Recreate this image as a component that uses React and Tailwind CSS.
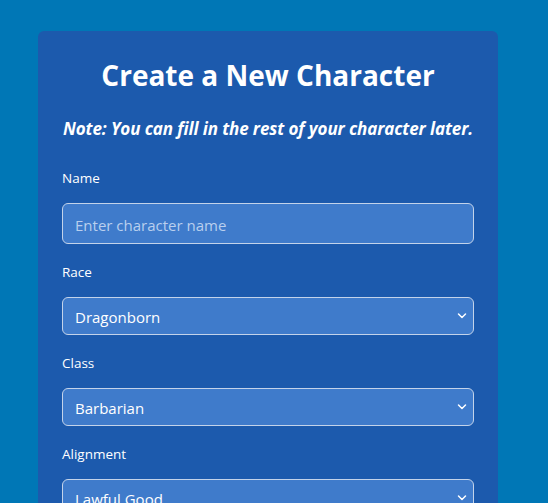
import React from "react";

function Chevron() {
  return (
    <svg className="pointer-events-none absolute right-[6px] top-1/2 -translate-y-1/2" width="10" height="7" viewBox="0 0 10 7" fill="none">
      <path d="M1.5 1.5 L5 5 L8.5 1.5" stroke="white" strokeWidth="1.5" strokeLinecap="round" strokeLinejoin="round" />
    </svg>
  );
}

function SelectField({ label, value }) {
  return (
    <div className="mb-[18px]">
      <div className="mb-[15px] text-[13.5px] leading-[20px] text-white">{label}</div>
      <div className="relative flex h-[38px] items-center rounded-[6px] border border-[#c3d3ea] bg-[#3f7bcb] px-[12px] pt-[3px] text-[15px] text-white">
        {value}
        <Chevron />
      </div>
    </div>
  );
}

export default function App() {
  return (
    <div className="h-[503px] overflow-hidden bg-[#0077b6] pl-[38px] pt-[31px]" style={{ fontFamily: '"Open Sans", "Noto Sans", sans-serif' }}>
      <div className="w-[460px] rounded-t-[6px] bg-[#1c5aad] px-[24px] pt-[26px] pb-[20px]">
        <h1 className="text-center text-[28px] font-bold leading-[36px] text-white">Create a New Character</h1>
        <p className="mt-[24px] whitespace-nowrap text-center text-[17px] font-bold italic leading-[24px] tracking-[-0.1px] text-white">
          Note: You can fill in the rest of your character later.
        </p>
        <div className="mt-[27px]">
          <div className="mb-[18px]">
            <div className="mb-[15px] text-[13.5px] leading-[20px] text-white">Name</div>
            <div className="flex h-[41px] items-center rounded-[6px] border border-[#c3d3ea] bg-[#3f7bcb] px-[12px] pt-[3px] text-[15px] text-[#b9cfee]">
              Enter character name
            </div>
          </div>
          <SelectField label="Race" value="Dragonborn" />
          <SelectField label="Class" value="Barbarian" />
          <SelectField label="Alignment" value="Lawful Good" />
        </div>
      </div>
    </div>
  );
}
